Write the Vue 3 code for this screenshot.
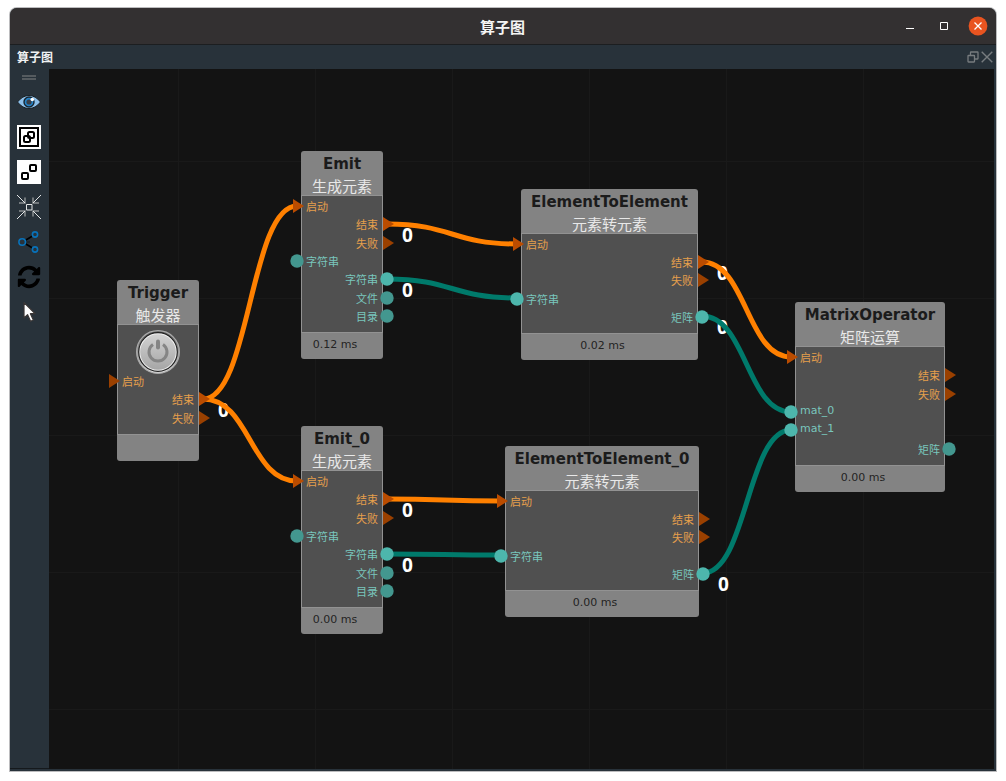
<script setup>
const EDGE = 4
const HEADER = 44

const flow = (dir, label, row, linked) => ({ kind: 'flow', dir, label, row, linked })
const data = (dir, label, row, linked) => ({ kind: 'data', dir, label, row, linked })

const emitPorts = () => [
  flow('in', '启动', 0, true),
  flow('out', '结束', 1, true),
  flow('out', '失败', 2, false),
  data('in', '字符串', 3, false),
  data('out', '字符串', 4, true),
  data('out', '文件', 5, false),
  data('out', '目录', 6, false),
]

const nodes = [
  {
    id: 'trigger', name: 'Trigger', label: '触发器', time: '', power: true,
    x: 68, y: 211, width: 82,
    ports: [flow('in', '启动', 0, false), flow('out', '结束', 1, true), flow('out', '失败', 2, false)],
  },
  { id: 'emit', name: 'Emit', label: '生成元素', time: '0.12 ms', x: 252, y: 82, width: 82, ports: emitPorts() },
  { id: 'emit0', name: 'Emit_0', label: '生成元素', time: '0.00 ms', x: 252, y: 357, width: 82, ports: emitPorts() },
  {
    id: 'ete', name: 'ElementToElement', label: '元素转元素', time: '0.02 ms',
    x: 472, y: 120, width: 177,
    ports: [
      flow('in', '启动', 0, true), flow('out', '结束', 1, true), flow('out', '失败', 2, false),
      data('in', '字符串', 3, true), data('out', '矩阵', 4, true),
    ],
  },
  {
    id: 'ete0', name: 'ElementToElement_0', label: '元素转元素', time: '0.00 ms',
    x: 456, y: 377, width: 194,
    ports: [
      flow('in', '启动', 0, true), flow('out', '结束', 1, false), flow('out', '失败', 2, false),
      data('in', '字符串', 3, true), data('out', '矩阵', 4, true),
    ],
  },
  {
    id: 'matrix', name: 'MatrixOperator', label: '矩阵运算', time: '0.00 ms',
    x: 746, y: 233, width: 150,
    ports: [
      flow('in', '启动', 0, true), flow('out', '结束', 1, false), flow('out', '失败', 2, false),
      data('in', 'mat_0', 3, true), data('in', 'mat_1', 4, true), data('out', '矩阵', 5, false),
    ],
  },
]

const isLatin = (text) => /^[a-z]/i.test(text)

const portsHeight = (node) => Math.floor((node.ports.length * 55) / 3)

function anchor(id, row) {
  const node = nodes.find((n) => n.id === id)
  const port = node.ports[row]
  const rowHeight = portsHeight(node) / node.ports.length
  const top = node.y + HEADER + 2 + (node.power ? 46 : 0)
  return {
    x: port.dir === 'in' ? node.x - EDGE : node.x + node.width + EDGE,
    y: Math.floor(top + rowHeight * (row + 0.5)),
    kind: port.kind,
  }
}

const links = [
  ['trigger', 1, 'emit', 0],
  ['trigger', 1, 'emit0', 0],
  ['emit', 1, 'ete', 0],
  ['emit', 4, 'ete', 3],
  ['emit0', 1, 'ete0', 0],
  ['emit0', 4, 'ete0', 3],
  ['ete', 1, 'matrix', 0],
  ['ete', 4, 'matrix', 3],
  ['ete0', 4, 'matrix', 4],
]

const wires = links.map(([from, fromRow, to, toRow]) => {
  const a = anchor(from, fromRow)
  const b = anchor(to, toRow)
  const mid = (a.x + b.x) / 2
  return { key: `${from}${fromRow}${to}`, kind: a.kind, d: `M${a.x} ${a.y}C${mid} ${a.y} ${mid} ${b.y} ${b.x} ${b.y}` }
})

const counts = [['trigger', 1], ['emit', 1], ['emit', 4], ['emit0', 1], ['emit0', 4], ['ete', 1], ['ete', 4], ['ete0', 4]].map(
  ([id, row]) => ({ key: id + row, ...anchor(id, row), value: 0 }),
)
</script>

<template>
  <main class="window">
    <header class="titlebar">
      <h1>算子图</h1>
      <div class="window-buttons">
        <button type="button" aria-label="最小化">
          <svg viewBox="0 0 20 20"><path d="M6 12.500h8" stroke="#fff" /></svg>
        </button>
        <button type="button" aria-label="最大化">
          <svg viewBox="0 0 20 20"><path d="M6.500 6.500h7v7h-7z" fill="none" stroke="#fff" /></svg>
        </button>
        <button type="button" aria-label="关闭">
          <svg viewBox="0 0 20 20">
            <circle cx="10" cy="10" r="9.400" fill="#e95420" />
            <path d="M6.500 6.500l7 7m0-7l-7 7" stroke="#fff" stroke-width="1.300" />
          </svg>
        </button>
      </div>
    </header>

    <div class="dock-title">
      <h2>算子图</h2>
      <div class="dock-buttons">
        <button type="button" aria-label="浮动">
          <svg viewBox="0 0 12 12" fill="none" stroke="#777c7f" stroke-width="1.300">
            <path d="M3.500 4V1.500Q3.500 1 4 1H10.500Q11 1 11 1.500V7.500Q11 8 10.500 8H8" />
            <rect x="1" y="4.500" width="6.500" height="6.500" rx=".5" />
          </svg>
        </button>
        <button type="button" aria-label="关闭面板">
          <svg viewBox="0 0 12 12"><path d="M.7.700l10.600 10.600M11.300.700L.700 11.300" stroke="#777c7f" stroke-width="1.400" /></svg>
        </button>
      </div>
    </div>

    <div class="workspace">
      <nav class="toolbar" aria-label="工具">
        <span class="grip"></span>
        <button type="button" aria-label="显示">
          <svg viewBox="0 0 24 24">
            <path d="M.5 12Q5.500 5.500 12 5.500T23.500 12Q18.500 18.500 12 18.500T.5 12z" fill="#8dc0ea" stroke="#1a1f22" />
            <circle cx="12" cy="12" r="5" fill="#2382c6" stroke="#182530" stroke-width="1.400" />
            <circle cx="12" cy="12" r="2.600" fill="#3a3f48" />
            <circle cx="15.300" cy="9.500" r="1.800" fill="#fff" />
          </svg>
        </button>
        <button type="button" aria-label="组合">
          <svg viewBox="0 0 24 24">
            <path d="M0 0h24v24H0z" fill="#fff" />
            <g fill="none" stroke="#000" stroke-width="2">
              <path d="M3 3h18v18H3z" />
              <rect x="7" y="11" width="6" height="6" rx="1.500" />
              <rect x="11" y="7" width="6" height="6" rx="1.500" />
            </g>
          </svg>
        </button>
        <button type="button" aria-label="取消组合">
          <svg viewBox="0 0 24 24">
            <path d="M0 0h24v24H0z" fill="#fff" />
            <g fill="none" stroke="#000" stroke-width="2">
              <rect x="5" y="13" width="6" height="6" rx="1" />
              <rect x="13" y="5" width="6" height="6" rx="1" />
            </g>
          </svg>
        </button>
        <button type="button" aria-label="居中">
          <svg viewBox="0 0 24 24" fill="none">
            <path d="M2 8h6V2.500M22 8h-6V2.500M2 16h6v5.500M22 16h-6v5.500" stroke="#8b9092" stroke-width="1.500" />
            <path d="M0 0l8 8M24 0l-8 8M0 24l8-8M24 24l-8-8M9.500 9.500h5.500v5.500H9.500z" stroke="#e4e6e7" />
          </svg>
        </button>
        <button type="button" aria-label="布局">
          <svg viewBox="0 0 24 24" fill="none">
            <path d="M8 10.500L15.500 6M8 13.500l7.500 4.500" stroke="#000" stroke-width="1.600" />
            <path d="M9.500 12h4" stroke="#000" stroke-dasharray="1 1" />
            <g stroke="#0872ba" stroke-width="1.600">
              <circle cx="5.200" cy="12" r="3.300" />
              <circle cx="18" cy="4.500" r="2.600" />
              <circle cx="18" cy="19.500" r="2.600" />
            </g>
          </svg>
        </button>
        <button type="button" aria-label="刷新">
          <svg viewBox="-10 -10 532 532">
            <path d="M370.720 133.280C339.458 104.008 298.888 87.962 255.848 88c-77.458.068-144.328 53.178-162.791 126.850-1.344 5.363-6.122 9.150-11.651 9.150H24.103c-7.498 0-13.194-6.807-11.807-14.176C33.933 94.924 134.813 8 256 8c66.448 0 126.791 26.136 171.315 68.685L463.030 40.970C478.149 25.851 504 36.559 504 57.941V192c0 13.255-10.745 24-24 24H345.941c-21.382 0-32.090-25.851-16.971-40.971l41.750-41.749zM32 296h134.059c21.382 0 32.090 25.851 16.971 40.971l-41.750 41.750c31.262 29.273 71.835 45.319 114.876 45.280 77.418-.070 144.315-53.144 162.787-126.849 1.344-5.363 6.122-9.150 11.651-9.150h57.304c7.498 0 13.194 6.807 11.807 14.176C478.067 417.076 377.187 504 256 504c-66.448 0-126.791-26.136-171.315-68.685L48.970 471.030C33.851 486.149 8 475.441 8 454.059V320c0-13.255 10.745-24 24-24z" />
          </svg>
        </button>
        <button type="button" aria-label="选择">
          <svg viewBox="0 0 24 24">
            <path d="M7 2.500V18l3.600-3.300 3 6.500 2.700-1.200-2.900-6.300H18z" fill="#fff" stroke="#3a3636" stroke-width="1.200" stroke-linejoin="round" />
          </svg>
        </button>
      </nav>

      <section class="canvas" aria-label="算子图">
        <span v-for="c in counts" :key="c.key" class="count" :style="{ left: c.x + 'px', top: c.y + 'px' }">{{ c.value }}</span>

        <svg class="wires" aria-hidden="true">
          <path v-for="w in wires" :key="w.key" :class="w.kind" :d="w.d" />
        </svg>

        <article
          v-for="node in nodes"
          :key="node.id"
          class="node"
          :style="{ left: node.x + 'px', top: node.y + 'px', width: node.width + 'px' }"
        >
          <header>
            <h3>{{ node.name }}</h3>
            <p>{{ node.label }}</p>
          </header>
          <div class="body">
            <button v-if="node.power" type="button" class="power" aria-label="触发">
              <svg viewBox="0 0 44 44">
                <defs>
                  <linearGradient id="rim" x1="0" y1="0" x2="0" y2="1">
                    <stop offset="0" stop-color="#555" />
                    <stop offset="1" stop-color="#ddd" />
                  </linearGradient>
                  <linearGradient id="face" x1="0" y1="0" x2="0" y2="1">
                    <stop offset="0" stop-color="#d2d2d2" />
                    <stop offset="1" stop-color="#a6a6a6" />
                  </linearGradient>
                </defs>
                <circle cx="22" cy="22" r="21.400" fill="url(#rim)" stroke="#aaa" stroke-width="1.200" />
                <circle cx="22" cy="22" r="19.300" fill="#f0f0f0" stroke="#222" stroke-width="1.200" />
                <circle cx="22" cy="22" r="17.800" fill="url(#face)" />
                <path d="M17 14.600a9 9 0 1 0 10 0" fill="none" stroke="#858585" stroke-width="3" />
                <path d="M22 11.500v6" stroke="#858585" stroke-width="4" stroke-linecap="round" />
              </svg>
            </button>
            <ul :style="{ height: portsHeight(node) + 'px' }">
              <li v-for="port in node.ports" :key="port.row" :class="[port.dir, port.kind, { linked: port.linked, latin: isLatin(port.label) }]">
                <svg class="pin" viewBox="0 0 14 14" aria-hidden="true">
                  <path v-if="port.kind === 'flow'" d="M3 0L14 7L3 14z" />
                  <circle v-else cx="7" cy="7" r="6.700" />
                </svg>
                <span>{{ port.label }}</span>
              </li>
            </ul>
          </div>
          <footer>{{ node.time }}</footer>
        </article>
      </section>
    </div>
  </main>
</template>

<style>
html,
body {
  background: #fff;
}
</style>

<style scoped>
.window {
  box-sizing: border-box;
  display: flex;
  flex-direction: column;
  height: calc(100vh - 18px);
  margin: 8px 10px 10px;
  background: #28323a;
  border-radius: 7px 7px 0 0;
  box-shadow: 0 0 0 1px #bcbcbe;
  overflow: hidden;
  font-family: "DejaVu Sans", "Noto Sans CJK SC", sans-serif;
}

h1,
h2,
h3,
p,
ul {
  margin: 0;
  padding: 0;
  list-style: none;
}

button {
  display: block;
  padding: 0;
  border: 0;
  background: none;
}

svg {
  display: block;
}

.titlebar {
  position: relative;
  display: flex;
  align-items: center;
  justify-content: center;
  height: 36px;
  background: #333031;
  border-bottom: 1px solid #1c1e20;
}

h1 {
  font: bold 15px/38px "Noto Sans CJK SC", sans-serif;
  padding: 1px 1px 0 0;
  color: #f4f4f4;
}

.window-buttons {
  position: absolute;
  right: 8px;
  display: flex;
  gap: 14px;
}

.window-buttons button,
.window-buttons svg {
  width: 20px;
  height: 20px;
}

.dock-title {
  display: flex;
  align-items: center;
  justify-content: space-between;
  height: 24px;
  padding: 0 3px 0 7px;
}

h2 {
  font: bold 12px/24px "Noto Sans CJK SC", sans-serif;
  color: #f0f2f3;
}

.dock-buttons {
  display: flex;
  gap: 2px;
}

.dock-buttons svg {
  width: 12px;
  height: 12px;
}

.workspace {
  display: flex;
  flex: 1;
  min-height: 0;
  padding: 0 2px 2px 0;
}

.toolbar {
  display: flex;
  flex-direction: column;
  align-items: center;
  gap: 11px;
  width: 39px;
  padding: 6px 1px 0 0;
  box-sizing: border-box;
  border-bottom: 1px solid #15191c;
}

.grip {
  width: 14px;
  height: 1px;
  margin-bottom: -1px;
  border: solid #555b5f;
  border-width: 2px 0;
}

.toolbar svg {
  width: 24px;
  height: 24px;
}

.canvas {
  position: relative;
  flex: 1;
  overflow: hidden;
  background-color: #131313;
  background-image:
    linear-gradient(to right, #191919 1px, transparent 1px),
    linear-gradient(to bottom, #191919 1px, transparent 1px);
  background-size: 137px 137px;
  background-position: 129px 92px;
}

.wires {
  position: absolute;
  inset: 0;
  width: 100%;
  height: 100%;
  fill: none;
  stroke-width: 5px;
}

.wires .flow {
  stroke: #ff8000;
}

.wires .data {
  stroke: #007a6b;
}

.count {
  position: absolute;
  margin-left: 15px;
  color: #fff;
  font: bold 19px/22px "Noto Sans", sans-serif;
}

.node {
  position: absolute;
  border-radius: 3px;
  background: #838383;
  text-align: center;
}

.node header {
  height: 44px;
}

h3 {
  padding-top: 2px;
  font-size: 15px;
  line-height: 22px;
  font-weight: bold;
  color: #1b1b1b;
  white-space: nowrap;
}

.node p {
  font: 15px/21px "Noto Sans CJK SC", sans-serif;
  color: #e8e8e8;
  white-space: nowrap;
}

.body {
  padding: 1px 0 7px;
  border: 1px solid #929292;
  background: #505050;
}

.power {
  width: 44px;
  margin: 4px auto -2px;
}

.body ul {
  display: grid;
  grid-auto-rows: 1fr;
}

.body li {
  position: relative;
  display: flex;
  align-items: center;
  padding: 0 4px;
  font: 11px/18px "Noto Sans CJK SC", sans-serif;
}

.body .latin {
  align-items: flex-start;
  font: 11px/16px "DejaVu Sans", sans-serif;
}

.out {
  justify-content: flex-end;
}

.pin {
  position: absolute;
  top: calc(50% - 7px);
  width: 14px;
  height: 14px;
}

.in .pin {
  left: -12px;
}

.out .pin {
  right: -12px;
}

.flow {
  color: #e59f4c;
}

.data {
  color: #79c6bd;
}

.flow .pin {
  fill: #9a4000;
}

.flow.linked .pin {
  fill: #ba4c00;
}

.data .pin {
  fill: #43978f;
}

.data.linked .pin {
  fill: #4db6ac;
}

.node footer {
  height: 26px;
  padding-right: 14px;
  font-size: 11px;
  line-height: 23px;
  color: #242424;
}
</style>
